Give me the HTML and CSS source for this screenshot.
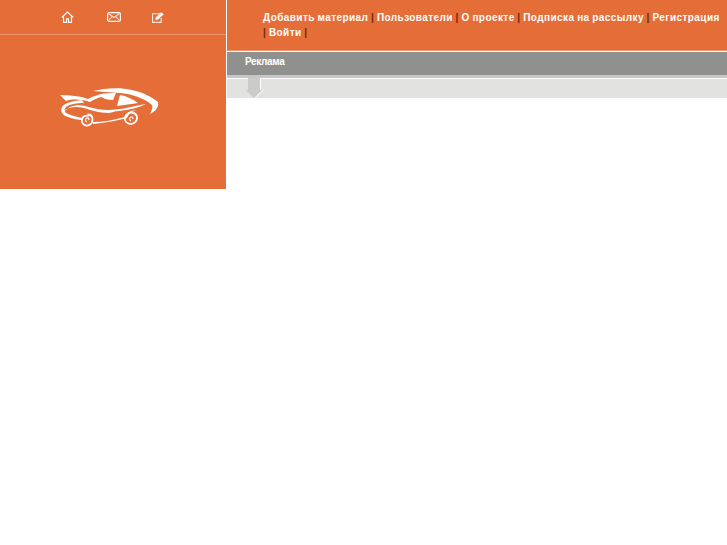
FILE: index.html
```html
<!DOCTYPE html>
<html lang="ru">
<head>
    <meta charset="UTF-8">
    <meta name="viewport" content="width=device-width, initial-scale=1.0">
    <title>Авто</title>
    <link rel="stylesheet" href="styles.css">
</head>
<body>
    <div class="page">
        <div class="sidebar">
            <div class="quick-icons">
                <a href="#" class="quick-icon">
                    <svg width="13" height="12" viewBox="0 0 13 12" fill="none" stroke="#fff" stroke-width="1.200">
                        <path d="M.7 6.400 6.500 1l5.800 5.400M2.500 5v6.300h3V7.800h2v3.500h3V5"/>
                    </svg>
                </a>
                <a href="#" class="quick-icon">
                    <svg width="14" height="10" viewBox="0 0 14 10" fill="none" stroke="#fff" stroke-width="1.100">
                        <rect x=".6" y=".6" width="12.800" height="8.800" rx="1.500"/>
                        <path d="M1.500 1.500 7 5.500l5.500-4M1.500 8.500 5 4.700M12.500 8.500 9 4.700" stroke-opacity=".75"/>
                    </svg>
                </a>
                <a href="#" class="quick-icon">
                    <svg width="12" height="11" viewBox="0 0 12 11" fill="none" stroke="#fff" stroke-width="1.100">
                        <path d="M8 1.800H.6v8.600h8.600V6" stroke-opacity=".85"/>
                        <path d="M3.600 7.700 4.200 5.300 9.300 .4l2.200 2L6.200 7.200z" fill="#fff" stroke-width=".4"/>
                    </svg>
                </a>
            </div>
            <div class="logo">
                <svg width="99" height="39" viewBox="0 0 99 39">
                    <g fill="#fff">
                        <path d="M33 3C45 0 60-1 72 2c10 2 20 7 26 12 1 5-2 9-8 12 2-4 3-7 2-9C84 10 72 6 60 5 50 4 42 4 33 3z"/>
                        <path d="M0 7C10 7 20 8 28 11c5-3 11-5 18-5l-5 3c-4 1-8 3-11 5C20 11 12 11 6 13 4 11 2 9 0 7z"/>
                        <path d="M22 12C12 13 5 15 2 19c-2 4 0 8 6 10 5 2 10 3 15 3l-1-2C17 29 10 27 6 25c-2-2-2-4 0-6 4-3 10-4 18-4z"/>
                        <path d="M5 23C9 18 17 16 25 18c7 2 15 4 23 4 13 0 26-4 38-6-8 4-18 6-27 7-4 0-8 2-11 2-9 0-17-3-24-5-8-2-15-1-21 3z"/>
                        <path d="M33 34c10 0 21-2 32-5 1-3 3-5 6-6l6-1c-4 1-8 3-10 8-11 3-23 5-34 6z"/>
                        <path d="M38 7c6-2 12-2 18-2l-3 7c-6 0-11-2-15-5z"/>
                        <path d="M60 7c6 1 13 4 18 8-6 1-14 2-21 3z"/>
                    </g>
                    <g fill="none" stroke="#fff">
                        <path d="M29 28c-3-1-6 0-7 3-1 4 2 7 5.500 6.500 3-.5 5-3 5-6s-2-5-5-5" stroke-width="1.800"/>
                        <path d="M27 34c-2-1-2-3 0-4 1.500-.5 2.500 1 1.500 2" stroke-width="1.200"/>
                        <path d="M73 25c-4-1-7 1-8 4-1 4 2 7 6 7 3 0 6-3 6-6s-2-5-5-5" stroke-width="1.800"/>
                        <path d="M71 33c-2-1-2-3 0-4 1.500-.5 2.500 1 1.500 2" stroke-width="1.200"/>
                    </g>
                </svg>
            </div>
        </div>
        <div class="main">
            <div class="top-menu">
                <a href="#">Добавить материал</a> <span class="sep">|</span>
                <a href="#">Пользователи</a> <span class="sep">|</span>
                <a href="#">О проекте</a> <span class="sep">|</span>
                <a href="#">Подписка на рассылку</a> <span class="sep">|</span>
                <a href="#">Регистрация</a> <span class="sep">|</span>
                <a href="#">Войти</a> <span class="sep">|</span>
            </div>
            <div class="ad-bar">Реклама</div>
            <div class="ad-strip">
                <svg class="ad-arrow" width="18" height="20" viewBox="0 0 18 20">
                    <path d="M3 0h12v12h3L9 20 0 12h3z" fill="#fff"/>
                    <path d="M2 0h12v12h2.500L8 20-.5 12H2z" fill="#cbcbca"/>
                </svg>
            </div>
        </div>
    </div>
</body>
</html>
```

FILE: styles.css
```css
html, body {
    margin: 0;
    padding: 0;
    background: #fff;
}

body {
    font-family: 'Liberation Sans', Arial, sans-serif;
    font-size: 10px;
}

.page {
    display: flex;
    align-items: flex-start;
}

.sidebar {
    width: 226px;
    height: 189px;
    flex-shrink: 0;
    background: #e56d38;
}

.quick-icons {
    height: 34px;
    border-bottom: 1px solid #ee9570;
    display: flex;
    align-items: center;
    padding-left: 61px;
}

.quick-icon {
    display: flex;
    width: 45.500px;
}

.logo {
    padding: 53px 0 0 60px;
}

.logo svg {
    display: block;
}

.main {
    flex: 1;
    margin-left: 1px;
    min-width: 0;
}

.top-menu {
    height: 51px;
    box-sizing: border-box;
    padding: 10px 2px 0 36px;
    background: #e56d38;
    border-bottom: 1px solid #ee9570;
    color: #6b2a0c;
    font-weight: bold;
    line-height: 15px;
    letter-spacing: 0.42px;
    word-spacing: -0.5px;
}

.top-menu a {
    color: #fff;
    text-decoration: none;
}

.ad-bar {
    height: 23px;
    border-top: 1px solid #fff;
    border-bottom: 3px solid #c6c6c5;
    padding-left: 18px;
    background: #90908e;
    color: #fff;
    font-weight: bold;
    letter-spacing: -0.35px;
    line-height: 20px;
}

.ad-strip {
    height: 19px;
    border-top: 1px solid #fff;
    padding-left: 19px;
    background: #e2e2e1;
}

.ad-arrow {
    display: block;
    margin-top: -1px;
}
```
